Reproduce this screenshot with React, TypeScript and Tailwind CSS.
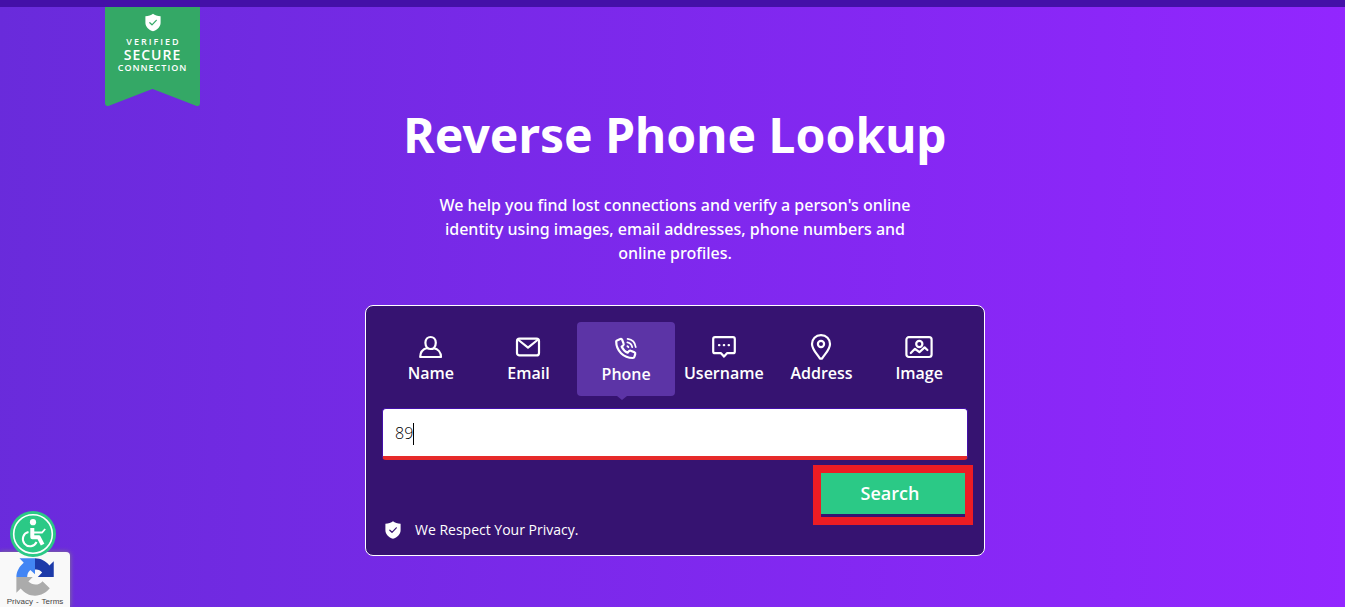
import { useState, type ChangeEvent, type ReactNode } from 'react';

type TabKey = 'name' | 'email' | 'phone' | 'username' | 'address' | 'image';

interface SearchTab {
  key: TabKey;
  label: string;
  icon: ReactNode;
}

function Icon({ children }: { children: ReactNode }) {
  return (
    <svg
      viewBox="0 0 28 28"
      className="size-7"
      fill="none"
      stroke="currentColor"
      strokeWidth="2.2"
      strokeLinecap="round"
      strokeLinejoin="round"
      aria-hidden="true"
    >
      {children}
    </svg>
  );
}

function ShieldIcon({ className, check }: { className: string; check: string }) {
  return (
    <svg viewBox="0 0 16 18" className={className} aria-hidden="true">
      <path
        d="M8 0.3C9.8 1.7 12.6 2.5 15.6 2.8V9.2C15.6 13.2 12.4 16.4 8 17.8C3.6 16.4 0.4 13.2 0.4 9.2V2.8C3.4 2.5 6.2 1.7 8 0.3Z"
        fill="white"
      />
      <path
        d="M4.8 9.2L7 11.3L11.3 6.8"
        fill="none"
        stroke={check}
        strokeWidth="1.2"
        strokeLinecap="round"
        strokeLinejoin="round"
      />
    </svg>
  );
}

const tabs: SearchTab[] = [
  {
    key: 'name',
    label: 'Name',
    icon: (
      <Icon>
        <path d="M10.3 15C8.8 13.8 8.4 12 8.4 9.8C8.4 6.2 10.8 4 13.6 4C16.4 4 18.8 6.2 18.8 9.8C18.8 12 18.4 13.8 16.9 15" />
        <path d="M10.3 15C6.3 16 3.2 19.3 3.2 24H24C24 19.3 20.9 16 16.9 15.2C15.2 16.2 12 16.2 10.3 15Z" />
      </Icon>
    ),
  },
  {
    key: 'email',
    label: 'Email',
    icon: (
      <Icon>
        <rect x="3" y="5.6" width="22" height="16.8" rx="2.5" />
        <path d="M4.5 7L14 14.6L23.5 7" />
      </Icon>
    ),
  },
  {
    key: 'phone',
    label: 'Phone',
    icon: (
      <Icon>
        <path d="M5 6.4L8.3 5C9 4.7 9.8 5 10.1 5.7L11.6 9.7C11.9 10.4 11.6 11 11.1 11.5L9.7 12.7C11 15.4 13.1 17.6 15.6 18.7L17 17.1C17.5 16.6 18.2 16.4 18.8 16.7L22.4 18.3C23.1 18.6 23.4 19.4 23.2 20.1L22.4 22.8C22.2 23.6 21.6 24 20.8 24C11.6 24 4.2 16.7 4.2 7.6C4.2 7 4.5 6.6 5 6.4Z" />
        <path d="M15.6 4.8C20 5.4 23.2 8.6 23.7 13M15.4 8.4C18 8.9 19.7 10.6 20.2 13.2M15.4 12.2L16.4 13.2" strokeWidth="1.8" />
      </Icon>
    ),
  },
  {
    key: 'username',
    label: 'Username',
    icon: (
      <Icon>
        <path d="M5 4.2H23C24 4.2 24.8 5 24.8 6V18.4C24.8 19.4 24 20.2 23 20.2H17L14 23.6L11 20.2H5C4 20.2 3.2 19.4 3.2 18.4V6C3.2 5 4 4.2 5 4.2Z" />
        <path d="M9 12.2H9.4M13.8 12.2H14.2M18.6 12.2H19" />
      </Icon>
    ),
  },
  {
    key: 'address',
    label: 'Address',
    icon: (
      <Icon>
        <path d="M14 2.2C8.6 2.2 5 6.2 5 11C5 16.4 9.6 20.4 12.6 25C13.3 26 14.7 26 15.4 25C18.4 20.4 23 16.4 23 11C23 6.2 19.4 2.2 14 2.2Z" />
        <circle cx="14" cy="11" r="3.1" />
      </Icon>
    ),
  },
  {
    key: 'image',
    label: 'Image',
    icon: (
      <Icon>
        <rect x="1.4" y="4.2" width="25.2" height="19.8" rx="2.5" />
        <circle cx="14.3" cy="11" r="3.1" />
        <path d="M5.8 20L10 15.8L14.4 19.2L19.6 14.4L22.4 17" />
      </Icon>
    ),
  },
];

function SecureBadge() {
  return (
    <div className="absolute top-0 left-[105px] h-[99px] w-[95px] text-white">
      <svg viewBox="0 0 95 99" className="absolute inset-0" aria-hidden="true">
        <path
          d="M0 0H95V96C95 98.5 93 99.6 91 98.7L49 82.4Q47.5 81.8 46 82.4L4 98.7C2 99.6 0 98.5 0 96Z"
          fill="#34a866"
        />
      </svg>
      <div className="relative flex flex-col items-center pt-1.5 font-['Open_Sans',sans-serif]">
        <ShieldIcon className="h-[19px] w-4" check="#34a866" />
        <span className="mt-1 pl-0.5 text-[9px] leading-3 font-semibold tracking-[2px]">VERIFIED</span>
        <span className="text-sm leading-[14px] font-semibold tracking-[1px]">SECURE</span>
        <span className="text-[9px] leading-3 font-semibold tracking-[1px]">CONNECTION</span>
      </div>
    </div>
  );
}

function AccessibilityButton() {
  return (
    <button
      type="button"
      aria-label="Accessibility"
      className="absolute bottom-[50px] left-2.5 z-10 size-[46px] rounded-full bg-[#2bc986]"
    >
      <svg viewBox="0 0 46 46" fill="none" stroke="white" aria-hidden="true">
        <circle cx="23" cy="23" r="19.3" strokeWidth="1.6" />
        <circle cx="23" cy="11.2" r="3.1" fill="white" stroke="none" />
        <path d="M22.3 17V26.3H28.8L32.6 33.6" strokeWidth="4" strokeLinejoin="round" />
        <path d="M23 21.5H32L35.2 18" strokeWidth="1.8" />
        <path d="M18.5 21A7.2 7.2 0 1 0 26.6 31" strokeWidth="2" />
      </svg>
    </button>
  );
}

function RecaptchaBadge() {
  return (
    <div className="absolute bottom-0 left-0 flex h-[55px] w-[70px] flex-col items-center rounded-tr-sm bg-[#f9f9f9] pt-[5px] shadow-[0_0_5px_gray]">
      <svg viewBox="0 0 64 64" className="size-10 shrink-0" aria-hidden="true">
        <path d="M62 32V6.6L55 13.6C49.3 6.6 41 2.1 32 2.1V20C37 19.4 40.6 21 43.4 24.6L36.5 32H62Z" fill="#1c3aa9" />
        <path d="M32 2.1H7.2L14 9C7 14.6 2.2 23 2.2 32H19.5C19.5 27 21.2 23.6 24.6 20.6L32 27.5V2.1Z" fill="#4285f4" />
        <path d="M2.2 32V57L9.1 50.2C14.9 57.4 23 61.8 32 61.8C41.6 61.8 50.2 57.3 55.6 50.1L44 38.6C38.6 45.4 28.4 46 21.4 39.2L28.4 32H2.2Z" fill="#ababab" />
      </svg>
      <p className="flex gap-[3px] font-['Liberation_Sans',sans-serif] text-[8px] leading-[10px] text-[#444]">
        <a href="#privacy">Privacy</a>
        <span>-</span>
        <a href="#terms">Terms</a>
      </p>
    </div>
  );
}

export default function App() {
  const [activeTab, setActiveTab] = useState<TabKey>('phone');
  const [query, setQuery] = useState('89');

  const handleQueryChange = (e: ChangeEvent<HTMLInputElement>) => {
    setQuery(e.target.value);
  };

  return (
    <div className="relative flex min-h-screen flex-col overflow-hidden bg-[#692bdb] font-['Open_Sans',sans-serif] text-white">
      <div className="h-[7px] bg-[#4410a8]" />

      <main className="relative grow bg-linear-[92deg,#692bdb,#9326ff] pb-12 pl-[5px]">
        <SecureBadge />

        <section className="flex flex-col items-center pt-24 text-center font-['Noto_Sans',sans-serif]">
          <h1 className="text-5xl leading-16 font-bold">Reverse Phone Lookup</h1>
          <p className="mt-[26px] max-w-[490px] text-base leading-6 font-medium">
            We help you find lost connections and verify a person's online identity using images,
            email addresses, phone numbers and online profiles.
          </p>
        </section>

        <form
          onSubmit={(e) => e.preventDefault()}
          className="mx-auto mt-10 max-w-[620px] rounded-lg border border-white bg-[#361371] px-4 pt-4 pb-[13px]"
        >
          <div role="tablist" className="grid grid-cols-6">
            {tabs.map((tab) => {
              const active = tab.key === activeTab;
              return (
                <button
                  key={tab.key}
                  type="button"
                  role="tab"
                  aria-selected={active}
                  onClick={() => setActiveTab(tab.key)}
                  className={`relative flex h-[74px] flex-col items-center rounded-sm text-base leading-6 font-semibold ${
                    active ? 'bg-[#5c34a6] pt-3' : 'pt-[11px]'
                  }`}
                >
                  {tab.icon}
                  {tab.label}
                  {active && (
                    <span className="absolute -bottom-1 left-10 size-0 border-x-5 border-t-4 border-x-transparent border-t-[#5c34a6]" />
                  )}
                </button>
              );
            })}
          </div>

          <div className="relative mt-3">
            <input
              type="tel"
              aria-label="Phone number"
              value={query}
              onChange={handleQueryChange}
              className="block h-[52px] w-full rounded-sm border border-b-4 border-[#4410a8] border-b-[#e62a2a] bg-white px-3 text-base font-light text-black caret-transparent outline-none"
            />
            {/* Text cursor follows the typed value */}
            <div
              className="pointer-events-none absolute inset-y-0 left-[13px] flex items-center text-base font-light"
              aria-hidden="true"
            >
              <span className="h-[22px] border-r border-black text-transparent select-none">{query}</span>
            </div>
          </div>

          <div className="mt-[13px] flex justify-end pr-[3px]">
            <div className="relative">
              <button type="submit" className="block h-[41px] w-36 bg-[#2bc986] pr-1.5 pb-0.5 text-lg font-semibold">
                Search
              </button>
              <div className="pointer-events-none absolute -inset-x-2 -top-2 -bottom-[11px] border-8 border-[#ed1c24]" />
            </div>
          </div>

          <div className="mt-1 flex items-center gap-3.5 pl-[3px] text-sm leading-6">
            <ShieldIcon className="h-[18px] w-4" check="#361371" />
            We Respect Your Privacy.
          </div>
        </form>
      </main>

      <AccessibilityButton />
      <RecaptchaBadge />
    </div>
  );
}
